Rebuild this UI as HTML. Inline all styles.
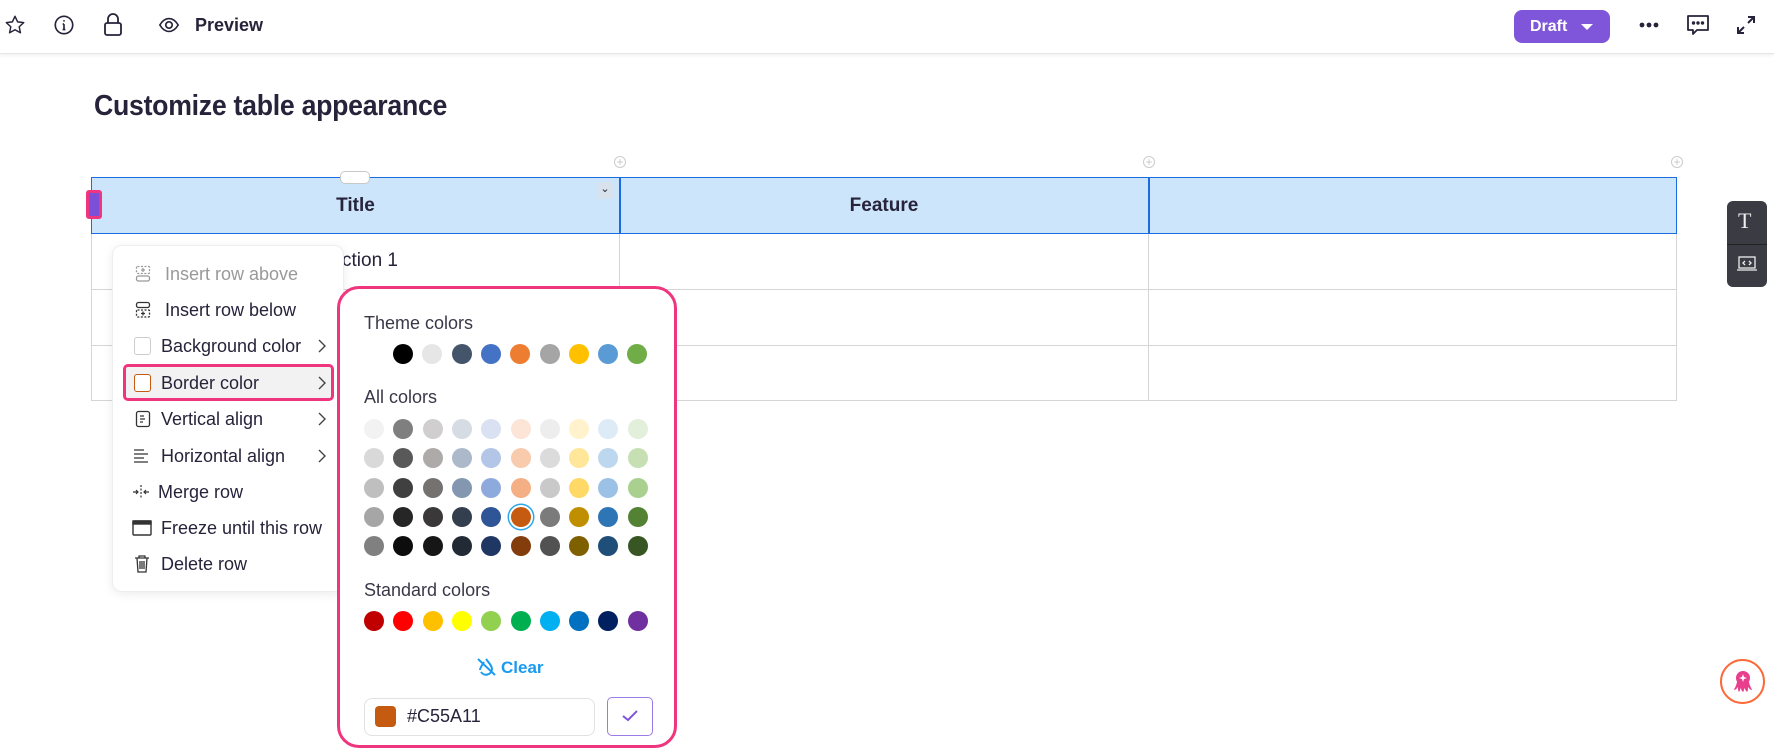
<!DOCTYPE html>
<html><head><meta charset="utf-8"><style>
*{box-sizing:border-box;margin:0;padding:0}
body{width:1774px;height:749px;overflow:hidden;background:#fff;font-family:"Liberation Sans",sans-serif;color:#26233a;position:relative}
.a{position:absolute}
.top{left:0;top:0;width:1774px;height:54px;border-bottom:1px solid #e6e6e6;box-shadow:0 2px 3px rgba(0,0,0,.05)}
.sw{position:absolute;width:20px;height:20px;border-radius:50%;transform:translate(-10px,-10px)}
.mi{position:absolute;left:0;width:230px;height:36px;font-size:18px;display:flex;align-items:center}
.mi span{position:absolute;left:52px}
.chev{position:absolute;left:204px;top:10px}
.lbl{position:absolute;font-size:18px;color:#3a3848}
</style></head><body>
<div class="a top"></div>
<svg class="a" style="left:4px;top:14px" width="22" height="22" viewBox="0 0 24 24" fill="none" stroke="#26233a" stroke-width="1.6" stroke-linejoin="round"><path d="M12 2.5l2.9 6.1 6.6.8-4.9 4.5 1.3 6.6L12 17.2l-5.9 3.3 1.3-6.6-4.9-4.5 6.6-.8z"/></svg>
<svg class="a" style="left:53px;top:14px" width="22" height="22" viewBox="0 0 24 24" fill="none" stroke="#26233a" stroke-width="1.8"><circle cx="12" cy="12" r="9.5"/><path d="M12 11v6M10.5 11H12M10.5 17h3" /><circle cx="12" cy="7.5" r="1" fill="#26233a" stroke="none"/></svg>
<svg class="a" style="left:102px;top:12px" width="22" height="26" viewBox="0 0 22 26" fill="none" stroke="#26233a" stroke-width="1.8"><rect x="3" y="11" width="16" height="12" rx="2"/><path d="M6 11V7a5 5 0 0 1 10 0v4"/></svg>
<svg class="a" style="left:158px;top:15px" width="22" height="20" viewBox="0 0 24 20" fill="none" stroke="#26233a" stroke-width="1.8"><path d="M2 10c3-5 6.5-7 10-7s7 2 10 7c-3 5-6.5 7-10 7S5 15 2 10z"/><circle cx="12" cy="10" r="3.5"/></svg>
<div class="a" style="left:195px;top:15px;font-size:18px;font-weight:bold;color:#26233a">Preview</div>
<div class="a" style="left:1514px;top:10px;width:96px;height:33px;background:#7f56d9;border-radius:8px;color:#fff;font-size:16px;font-weight:bold;display:flex;align-items:center;padding-left:16px">Draft<span style="margin-left:14px;border-left:6px solid transparent;border-right:6px solid transparent;border-top:6px solid #fff"></span></div>
<svg class="a" style="left:1638px;top:20px" width="22" height="10"><circle cx="4" cy="5" r="2.4" fill="#26233a"/><circle cx="11" cy="5" r="2.4" fill="#26233a"/><circle cx="18" cy="5" r="2.4" fill="#26233a"/></svg>
<svg class="a" style="left:1686px;top:14px" width="24" height="22" viewBox="0 0 24 22" fill="none" stroke="#26233a" stroke-width="1.8" stroke-linejoin="round"><path d="M2 2h20v14H11l-4 4v-4H2z"/><circle cx="7.5" cy="9" r=".8" fill="#26233a"/><circle cx="12" cy="9" r=".8" fill="#26233a"/><circle cx="16.5" cy="9" r=".8" fill="#26233a"/></svg>
<svg class="a" style="left:1735px;top:14px" width="22" height="22" viewBox="0 0 22 22" fill="none" stroke="#26233a" stroke-width="2"><path d="M13 3h6v6M19 3l-6 6M9 19H3v-6M3 19l6-6"/></svg>

<div class="a" style="left:94px;top:90px;font-size:29px;font-weight:bold;color:#26233a;letter-spacing:-0.3px;transform:scaleX(0.92);transform-origin:left">Customize table appearance</div>

<svg class="a" style="left:613px;top:155px" width="14" height="14"><circle cx="7" cy="7" r="5.5" fill="none" stroke="#ccc"/><path d="M7 4v6M4 7h6" stroke="#ccc"/></svg>
<svg class="a" style="left:1142px;top:155px" width="14" height="14"><circle cx="7" cy="7" r="5.5" fill="none" stroke="#ccc"/><path d="M7 4v6M4 7h6" stroke="#ccc"/></svg>
<svg class="a" style="left:1670px;top:155px" width="14" height="14"><circle cx="7" cy="7" r="5.5" fill="none" stroke="#ccc"/><path d="M7 4v6M4 7h6" stroke="#ccc"/></svg>

<div class="a" style="left:91px;top:233px;width:1586px;height:168px;border:1px solid #d5d5d5;border-top:none"></div>
<div class="a" style="left:91px;top:289px;width:1586px;height:1px;background:#d5d5d5"></div>
<div class="a" style="left:91px;top:345px;width:1586px;height:1px;background:#d5d5d5"></div>
<div class="a" style="left:619px;top:233px;width:1px;height:168px;background:#d5d5d5"></div>
<div class="a" style="left:1148px;top:233px;width:1px;height:168px;background:#d5d5d5"></div>
<div class="a" style="left:91px;top:177px;width:1586px;height:57px;background:#cce5fa;border:1.5px solid #1a6ce0"></div>
<div class="a" style="left:619px;top:177px;width:1.5px;height:57px;background:#1a6ce0"></div>
<div class="a" style="left:1148px;top:177px;width:1.5px;height:57px;background:#1a6ce0"></div>
<div class="a" style="left:91px;top:195px;width:529px;text-align:center;font-size:19px;font-weight:bold;color:#26233a">Title</div>
<div class="a" style="left:620px;top:195px;width:528px;text-align:center;font-size:19px;font-weight:bold;color:#26233a">Feature</div>
<div class="a" style="left:597px;top:182px;width:16px;height:17px;background:#d7e2ed;border-radius:3px;font-size:11px;text-align:center;line-height:14px">⌄</div>
<div class="a" style="left:340px;top:171px;width:30px;height:13px;background:#fff;border:1px solid #c8c8c8;border-radius:5px"></div>
<div class="a" style="left:86px;top:190px;width:16px;height:29px;background:#7b4fd8;border:3px solid #f0357f;border-radius:3px"></div>
<div class="a" style="left:342px;top:250px;font-size:19px;color:#26233a">ction 1</div>

<div class="a" style="left:112px;top:245px;width:232px;height:347px;background:#fff;border:1px solid #eee;border-radius:10px;box-shadow:0 2px 10px rgba(0,0,0,.08)">
 <div class="mi" style="top:10px;color:#999"><svg class="a" style="left:22px;top:9px" width="16" height="18" fill="none" stroke="#999" stroke-width="1.3"><rect x="1.5" y="1.5" width="13" height="7" rx="1" stroke-dasharray="2 1.5"/><rect x="1.5" y="11" width="13" height="5" rx="2"/><path d="M8 3v4M6 5h4"/></svg><span>Insert row above</span></div>
 <div class="mi" style="top:46px"><svg class="a" style="left:22px;top:9px" width="16" height="18" fill="none" stroke="#333" stroke-width="1.3"><rect x="1.5" y="1.5" width="13" height="5" rx="2"/><rect x="1.5" y="9" width="13" height="7" rx="1" stroke-dasharray="2 1.5"/><path d="M8 10.5v4M6 12.5h4"/></svg><span>Insert row below</span></div>
 <div class="mi" style="top:82px"><div class="a" style="left:21px;top:9px;width:17px;height:18px;border:1px solid #ccc;border-radius:3px"></div><span style="left:48px">Background color</span><svg class="chev" width="10" height="16" fill="none" stroke="#444" stroke-width="1.4"><path d="M2 2l6 6-6 6"/></svg></div>
 <div class="a" style="left:10px;top:118px;width:211px;height:37px;background:#f2f2f2;border:3px solid #f0357f;border-radius:5px"></div>
 <div class="mi" style="top:119px"><div class="a" style="left:21px;top:9px;width:17px;height:18px;border:1.5px solid #c55a11;border-radius:3px;background:#fff"></div><span style="left:48px">Border color</span><svg class="chev" width="10" height="16" fill="none" stroke="#444" stroke-width="1.4"><path d="M2 2l6 6-6 6"/></svg></div>
 <div class="mi" style="top:155px"><svg class="a" style="left:22px;top:9px" width="16" height="18" fill="none" stroke="#333" stroke-width="1.3"><rect x="1.5" y="1.5" width="13" height="15" rx="2"/><path d="M5 6h4M5 9h5M5 12h3"/></svg><span style="left:48px">Vertical align</span><svg class="chev" width="10" height="16" fill="none" stroke="#444" stroke-width="1.4"><path d="M2 2l6 6-6 6"/></svg></div>
 <div class="mi" style="top:192px"><svg class="a" style="left:20px;top:10px" width="16" height="16" fill="none" stroke="#333" stroke-width="1.3"><path d="M1 2h10M1 6h14M1 10h10M1 14h14"/></svg><span style="left:48px">Horizontal align</span><svg class="chev" width="10" height="16" fill="none" stroke="#444" stroke-width="1.4"><path d="M2 2l6 6-6 6"/></svg></div>
 <div class="mi" style="top:228px"><svg class="a" style="left:19px;top:10px" width="18" height="16" fill="none" stroke="#333" stroke-width="1.2"><path d="M9 1v14" stroke-dasharray="2 1.5"/><path d="M1 8h5M4 6l2 2-2 2M17 8h-5M14 6l-2 2 2 2"/></svg><span style="left:45px">Merge row</span></div>
 <div class="mi" style="top:264px"><svg class="a" style="left:19px;top:9px" width="20" height="18" fill="none" stroke="#333" stroke-width="1.4"><rect x="1" y="2" width="18" height="14" rx="1"/><rect x="1" y="2" width="18" height="3" fill="#333"/></svg><span style="left:48px">Freeze until this row</span></div>
 <div class="mi" style="top:300px"><svg class="a" style="left:21px;top:8px" width="16" height="19" fill="none" stroke="#333" stroke-width="1.3"><path d="M1 4h14M5 4V2h6v2M3 4l1 14h8l1-14M6 7v8M8 7v8M10 7v8"/></svg><span style="left:48px">Delete row</span></div>
</div>

<div class="a" style="left:337px;top:286px;width:340px;height:462px;background:#fff;border:3px solid #f0357f;border-radius:22px"></div>
<div class="lbl" style="left:364px;top:313px">Theme colors</div>
<div class="lbl" style="left:364px;top:387px">All colors</div>
<div class="lbl" style="left:364px;top:580px">Standard colors</div>
<div id="sw"></div>
<svg class="a" style="left:476px;top:657px" width="22" height="20" viewBox="0 0 22 20" fill="none" stroke="#1a9bf0" stroke-width="2"><path d="M10 2c3 4 6 7 6 10a6 6 0 0 1-11 3" /><path d="M4 13c0-2 2-5 4-8" /><path d="M2 2l17 16"/></svg>
<div class="a" style="left:501px;top:658px;font-size:17px;font-weight:bold;color:#1a9bf0">Clear</div>
<div class="a" style="left:364px;top:698px;width:231px;height:38px;border:1px solid #e2e2e2;border-radius:8px"></div>
<div class="a" style="left:375px;top:706px;width:21px;height:21px;border-radius:4px;background:#c55a11"></div>
<div class="a" style="left:407px;top:706px;font-size:18px;color:#26233a">#C55A11</div>
<div class="a" style="left:607px;top:697px;width:46px;height:39px;border:1.5px solid #9b7be6;border-radius:5px"></div>
<svg class="a" style="left:621px;top:709px" width="18" height="14" fill="none" stroke="#7f56d9" stroke-width="2"><path d="M2 7l5 4 9-9"/></svg>

<div class="a" style="left:1727px;top:201px;width:40px;height:86px;background:#3b3b43;border-radius:6px"></div>
<div class="a" style="left:1727px;top:244px;width:40px;height:1px;background:#222"></div>
<div class="a" style="left:1738px;top:208px;font-family:'Liberation Serif',serif;font-size:22px;color:#eee">T</div>
<svg class="a" style="left:1736px;top:255px" width="22" height="18" fill="none" stroke="#eee" stroke-width="1.3"><rect x="3" y="2" width="16" height="11"/><path d="M1 15h20"/><path d="M9 6l-2 2 2 2M13 6l2 2-2 2"/></svg>

<div class="a" style="left:1720px;top:659px;width:45px;height:45px;border-radius:50%;border:2.5px solid #fb6a3a;background:#fff"></div>
<svg class="a" style="left:1731px;top:670px" width="24" height="24" viewBox="0 0 24 24"><circle cx="12" cy="8" r="7" fill="#e83e8c"/><path d="M6 12c-1 5-3 7-3 8 2 0 3-2 4-3 0 2 0 4 1 5 1-1 1-3 2-4 0 2 1 3 2 4 1-1 1-2 1-4 1 1 2 3 3 4 1-1 1-3 1-5 1 1 2 3 4 3 0-1-2-3-3-8z" fill="#e83e8c"/><path d="M12 4l1 3 3 1-3 1-1 3-1-3-3-1 3-1z" fill="#fff"/></svg>

<script>
var h='';
function s(x,y,c,extra){h+='<div class="sw" style="left:'+x+'px;top:'+y+'px;background:#'+c+';'+(extra||'')+'"></div>';}
var th=['000000','e7e6e6','44546a','4472c4','ed7d31','a5a5a5','ffc000','5b9bd5','70ad47'];
th.forEach(function(c,i){s(403+29.3*(i),354,c);});
var g=[['f2f2f2','7f7f7f','d0cece','d6dce4','d9e1f2','fce4d6','ededed','fff2cc','ddebf7','e2efda'],
['d9d9d9','595959','aeaaaa','acb9ca','b4c6e7','f8cbad','dbdbdb','ffe699','bdd7ee','c6e0b4'],
['bfbfbf','404040','757171','8497b0','8ea9db','f4b084','c9c9c9','ffd966','9bc2e6','a9d08e'],
['a6a6a6','262626','3a3838','333f4f','2f5597','c55a11','7b7b7b','bf8f00','2e75b6','548235'],
['808080','0d0d0d','161616','222b35','203764','833c0c','525252','7f6000','1f4e78','375623']];
var ys=[429,458,488,517,546];
g.forEach(function(r,j){r.forEach(function(c,i){s(374+29.3*i,ys[j],c,(j==3&&i==5)?'box-shadow:0 0 0 2px #fff,0 0 0 3.5px #2aa6e8':'');});});
var st=['c00000','ff0000','ffc000','ffff00','92d050','00b050','00b0f0','0070c0','002060','7030a0'];
st.forEach(function(c,i){s(374+29.3*i,621,c);});
document.getElementById('sw').outerHTML=h;
</script>
</body></html>
